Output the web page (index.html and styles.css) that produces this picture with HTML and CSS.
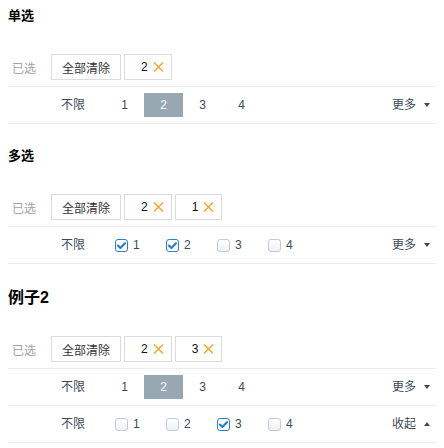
FILE: index.html
```html
<!DOCTYPE html>
<html lang="zh">
<head>
<meta charset="utf-8">
<link rel="stylesheet" href="styles.css">
</head>
<body>
<section class="section">
  <h3 class="title">单选</h3>
  <div class="row selected-row">
    <div class="label">已选</div>
    <div class="tags">
      <span class="tag">全部清除</span>
      <span class="tag tag-val">2<svg class="x" viewBox="0 0 11 10" width="11" height="10"><path d="M1 0.5 L10 9.5 M10 0.5 L1 9.5" stroke="#f5a623" stroke-width="1.4" fill="none"/></svg></span>
    </div>
  </div>
  <div class="row opt-row">
    <div class="label"></div>
    <div class="opts">
      <span class="any">不限</span>
      <span class="num">1</span>
      <span class="num active">2</span>
      <span class="num">3</span>
      <span class="num">4</span>
    </div>
    <div class="more">更多<span class="tri down"></span></div>
  </div>
</section>

<section class="section">
  <h3 class="title">多选</h3>
  <div class="row selected-row">
    <div class="label">已选</div>
    <div class="tags">
      <span class="tag">全部清除</span>
      <span class="tag tag-val">2<svg class="x" viewBox="0 0 11 10" width="11" height="10"><path d="M1 0.5 L10 9.5 M10 0.5 L1 9.5" stroke="#f5a623" stroke-width="1.4" fill="none"/></svg></span>
      <span class="tag tag-val">1<svg class="x" viewBox="0 0 11 10" width="11" height="10"><path d="M1 0.5 L10 9.5 M10 0.5 L1 9.5" stroke="#f5a623" stroke-width="1.4" fill="none"/></svg></span>
    </div>
  </div>
  <div class="row opt-row">
    <div class="label"></div>
    <div class="opts">
      <span class="any">不限</span>
      <label class="chk"><span class="box on"><svg viewBox="0 0 13 13" width="13" height="13"><path d="M3 6.6 L5.4 9 L10 4.2" stroke="#2c7fc9" stroke-width="2.2" fill="none" stroke-linecap="round" stroke-linejoin="round"/></svg></span>1</label>
      <label class="chk"><span class="box on"><svg viewBox="0 0 13 13" width="13" height="13"><path d="M3 6.6 L5.4 9 L10 4.2" stroke="#2c7fc9" stroke-width="2.2" fill="none" stroke-linecap="round" stroke-linejoin="round"/></svg></span>2</label>
      <label class="chk"><span class="box"></span>3</label>
      <label class="chk"><span class="box"></span>4</label>
    </div>
    <div class="more">更多<span class="tri down"></span></div>
  </div>
</section>

<section class="section">
  <h3 class="title big">例子2</h3>
  <div class="row selected-row">
    <div class="label">已选</div>
    <div class="tags">
      <span class="tag">全部清除</span>
      <span class="tag tag-val">2<svg class="x" viewBox="0 0 11 10" width="11" height="10"><path d="M1 0.5 L10 9.5 M10 0.5 L1 9.5" stroke="#f5a623" stroke-width="1.4" fill="none"/></svg></span>
      <span class="tag tag-val">3<svg class="x" viewBox="0 0 11 10" width="11" height="10"><path d="M1 0.5 L10 9.5 M10 0.5 L1 9.5" stroke="#f5a623" stroke-width="1.4" fill="none"/></svg></span>
    </div>
  </div>
  <div class="row opt-row">
    <div class="label"></div>
    <div class="opts">
      <span class="any">不限</span>
      <span class="num">1</span>
      <span class="num active">2</span>
      <span class="num">3</span>
      <span class="num">4</span>
    </div>
    <div class="more">更多<span class="tri down"></span></div>
  </div>
  <div class="row opt-row">
    <div class="label"></div>
    <div class="opts">
      <span class="any">不限</span>
      <label class="chk"><span class="box"></span>1</label>
      <label class="chk"><span class="box"></span>2</label>
      <label class="chk"><span class="box on"><svg viewBox="0 0 13 13" width="13" height="13"><path d="M3 6.6 L5.4 9 L10 4.2" stroke="#2c7fc9" stroke-width="2.2" fill="none" stroke-linecap="round" stroke-linejoin="round"/></svg></span>3</label>
      <label class="chk"><span class="box"></span>4</label>
    </div>
    <div class="more">收起<span class="tri up"></span></div>
  </div>
</section>
</body>
</html>
```

FILE: styles.css
```css
body {
  margin: 8px;
  font-family: "Liberation Sans", "Noto Sans CJK SC", sans-serif;
  font-size: 12px;
  color: #333;
  background: #fff;
}
.section + .section {
  margin-top: 24px;
}
.title {
  margin: 0 0 26px;
  font-size: 13px;
  line-height: 16px;
  font-weight: bold;
  color: #000;
}
.title.big {
  font-size: 16px;
  line-height: 20px;
  margin-top: 21px;
  margin-bottom: 24px;
}
.row {
  display: flex;
  align-items: center;
  border-bottom: 1px solid #ececec;
}
.selected-row {
  padding: 4px 0 6px;
}
.opt-row {
  padding: 6px 0;
}
.label {
  width: 43px;
  box-sizing: border-box;
  padding-left: 4px;
  color: #a3a3a3;
  flex: none;
}
.tags {
  display: flex;
  gap: 3px;
}
.tag {
  display: flex;
  align-items: center;
  height: 24px;
  padding: 0 10px;
  border: 1px solid #dcdcdc;
  color: #333;
}
.tag-val {
  padding: 0 7px 0 16px;
  gap: 5px;
  color: #111;
}
.x {
  display: block;
}
.opts {
  display: flex;
  align-items: center;
  color: #3b4a58;
}
.any {
  padding: 0 10px;
  margin-right: 10px;
  line-height: 24px;
}
.num {
  width: 39px;
  line-height: 24px;
  text-align: center;
}
.num.active {
  background: #97a8b3;
  color: #fff;
}
.chk {
  display: flex;
  align-items: center;
  width: 51px;
  box-sizing: border-box;
  padding-left: 10px;
  gap: 5px;
  line-height: 24px;
}
.box {
  width: 13px;
  height: 13px;
  box-sizing: border-box;
  border: 1px solid #c3cad2;
  border-radius: 3px;
  background: linear-gradient(#fff, #eef1f4);
  position: relative;
}
.box.on {
  border-color: #2c7fc9;
  background: #fff;
}
.box svg {
  position: absolute;
  left: -1px;
  top: -1px;
}
.more {
  margin-left: auto;
  display: flex;
  align-items: center;
  gap: 8px;
  padding-right: 6px;
  color: #3b4a58;
  line-height: 24px;
}
.tri {
  width: 0;
  height: 0;
  border-left: 3.5px solid transparent;
  border-right: 3.5px solid transparent;
}
.tri.down {
  border-top: 4px solid #3b4a58;
}
.tri.up {
  border-bottom: 4px solid #3b4a58;
}
```
